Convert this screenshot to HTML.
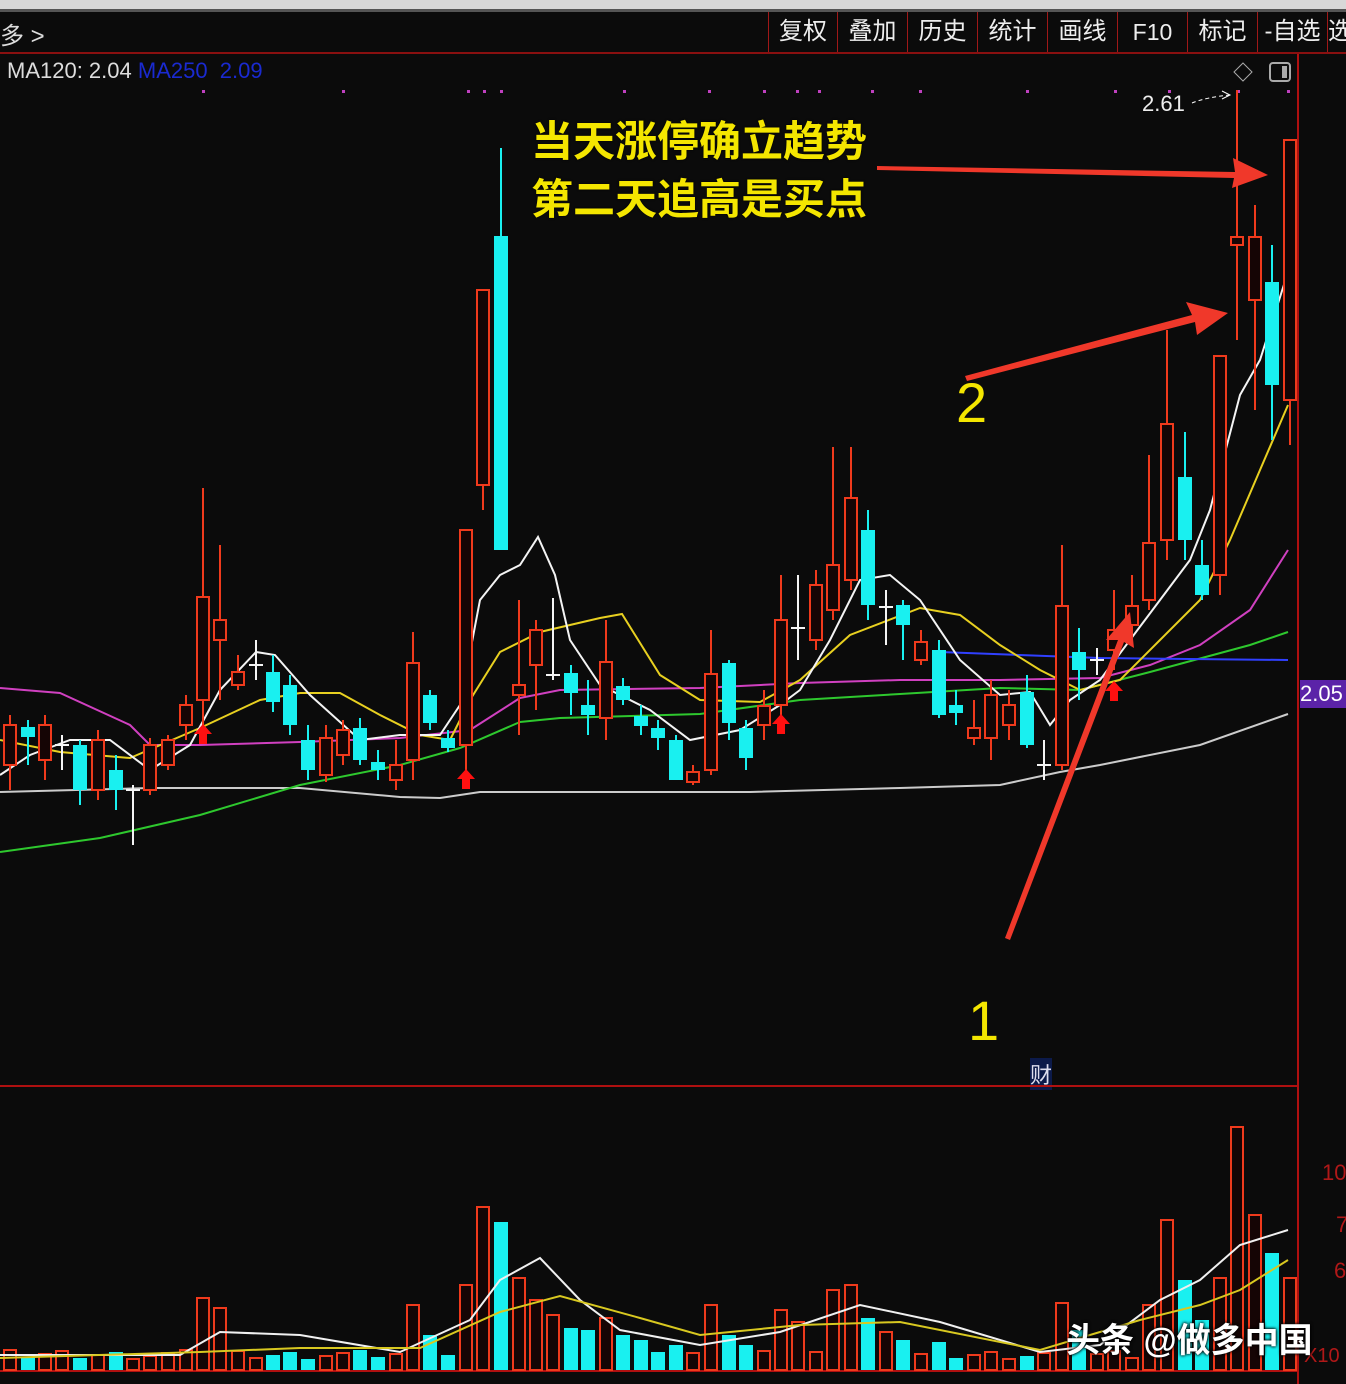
<!DOCTYPE html>
<html><head><meta charset="utf-8">
<style>
html,body{margin:0;padding:0;background:#0b0b0b;width:1346px;height:1384px;overflow:hidden}
#w{position:relative;width:1346px;height:1384px;font-family:"Liberation Sans","Noto Sans CJK SC",sans-serif}
.t{position:absolute;white-space:nowrap}
</style></head><body><div id="w">
<div style="position:absolute;left:0;top:0;width:1346px;height:9px;background:#d8d8d8"></div>
<div style="position:absolute;left:0;top:9px;width:1346px;height:3px;background:#555"></div>
<div class="t" style="left:0;top:16px;color:#ddd;font-size:24px">多 &gt;</div>
<div style="position:absolute;left:768px;top:12px;height:40px;display:flex">
<div style="border-left:1px solid #a01818;width:68px;color:#eee;font-size:24px;text-align:center;line-height:40px">复权</div>
<div style="border-left:1px solid #a01818;width:69px;color:#eee;font-size:24px;text-align:center;line-height:40px">叠加</div>
<div style="border-left:1px solid #a01818;width:69px;color:#eee;font-size:24px;text-align:center;line-height:40px">历史</div>
<div style="border-left:1px solid #a01818;width:69px;color:#eee;font-size:24px;text-align:center;line-height:40px">统计</div>
<div style="border-left:1px solid #a01818;width:69px;color:#eee;font-size:24px;text-align:center;line-height:40px">画线</div>
<div style="border-left:1px solid #a01818;width:69px;color:#eee;font-size:23px;text-align:center;line-height:40px">F10</div>
<div style="border-left:1px solid #a01818;width:69px;color:#eee;font-size:24px;text-align:center;line-height:40px">标记</div>
<div style="border-left:1px solid #a01818;width:69px;color:#eee;font-size:24px;text-align:center;line-height:40px">-自选</div>
<div style="border-left:1px solid #a01818;width:20px;color:#eee;font-size:24px;line-height:40px;overflow:hidden">选</div>
</div>
<div style="position:absolute;left:0;top:52px;width:1346px;height:2px;background:#8a1010"></div>
<div class="t" style="left:7px;top:58px;color:#ddd;font-size:22px">MA120: 2.04 <span style="color:#1a2ad0">MA250 &nbsp;2.09</span></div>
<div class="t" style="left:1142px;top:91px;color:#eee;font-size:22px">2.61</div>
<div class="t" style="left:531px;top:108px;color:#f4e600;font-size:42px;font-weight:bold;text-shadow:0 0 2px #000">当天涨停确立趋势</div>
<div class="t" style="left:531px;top:166px;color:#f4e600;font-size:42px;font-weight:bold;text-shadow:0 0 2px #000">第二天追高是买点</div>
<div class="t" style="left:956px;top:370px;color:#f4e600;font-size:56px">2</div>
<div class="t" style="left:968px;top:988px;color:#f4e600;font-size:56px">1</div>
<div class="t" style="left:1030px;top:1058px;color:#dde;font-size:22px;background:#0c1a4a">财</div>
<div class="t" style="left:1300px;top:680px;width:46px;height:28px;background:#5b23a8;color:#fff;font-size:22px;line-height:28px">2.05</div>
<div class="t" style="left:1322px;top:1160px;color:#b01818;font-size:22px">10</div>
<div class="t" style="left:1336px;top:1212px;color:#b01818;font-size:22px">7</div>
<div class="t" style="left:1334px;top:1258px;color:#b01818;font-size:22px">6</div>
<div class="t" style="left:1304px;top:1345px;color:#b01818;font-size:20px">X10</div>
<svg id="s" width="1346" height="1384" style="position:absolute;left:0;top:0"></svg>
<div class="t" style="left:1066px;top:1313px;color:#fff;font-size:34px;font-weight:bold;text-shadow:0 0 3px #000,0 0 3px #000">头条 @做多中国</div>
</div>
<script>
var s=document.getElementById('s'),h='';
h+='<line x1="1298" y1="54" x2="1298" y2="1384" stroke="#b01010" stroke-width="2"/>';
h+='<line x1="0" y1="1086" x2="1298" y2="1086" stroke="#b01010" stroke-width="2"/>';
h+='<line x1="0" y1="1371" x2="1298" y2="1371" stroke="#b01010" stroke-width="2"/>';
h+='<path d="M1243 63 l9 9 -9 9 -9 -9z" fill="none" stroke="#aaa"/><rect x="1270" y="63" width="20" height="18" rx="3" fill="none" stroke="#aaa" stroke-width="2"/><rect x="1282" y="66" width="5" height="12" fill="#aaa"/>';
[202,342,467,483,500,623,708,763,796,818,871,919,1026,1114,1168,1237,1287].forEach(function(x){h+='<rect x="'+x+'" y="90" width="3" height="3" fill="#c040c0"/>';});
h+='<path d="M1192 103 q15 -6 38 -8" stroke="#fff" fill="none" stroke-dasharray="4 3"/><path d="M1222 91 l8 4 -8 4" stroke="#fff" fill="none"/>';
function pl(p,c,w){h+='<polyline points="'+p+'" fill="none" stroke="'+c+'" stroke-width="'+(w||2)+'"/>';}
pl("0,792 150,788 300,788 400,797 440,798 480,792 600,792 750,792 900,788 1000,785 1060,772 1100,765 1200,745 1288,714","#ccc");
pl("0,852 100,838 200,815 300,785 400,765 460,748 520,722 560,718 700,714 800,700 900,694 1000,688 1080,690 1150,672 1250,645 1288,632","#2ec82e");
pl("0,688 60,693 130,725 150,745 200,745 300,742 400,738 470,730 520,698 560,690 700,688 800,683 900,680 1000,680 1100,678 1150,665 1200,645 1250,610 1288,550","#d040c0");
pl("940,652 1100,658 1288,660","#3040ff");
pl("0,740 60,752 130,758 200,728 260,700 300,693 340,693 380,715 420,735 450,740 470,700 500,652 540,632 600,618 622,614 660,675 700,700 760,702 800,680 850,635 920,608 960,615 1000,645 1040,670 1080,690 1120,680 1160,640 1200,600 1230,540 1260,470 1288,405","#e8d020");
pl("0,775 30,755 70,740 110,740 150,770 190,745 220,690 256,652 275,655 310,695 360,740 400,735 440,735 460,705 480,600 500,575 520,565 538,537 555,575 570,640 600,685 650,710 690,740 740,730 780,705 800,690 830,640 860,580 890,575 920,600 960,660 1000,695 1030,692 1050,725 1070,700 1100,680 1130,640 1160,600 1190,560 1210,510 1240,395 1260,360 1288,272","#f4f4f4");
var C=[[10,725,765,715,790,'r'],[28,727,737,720,765,'c'],[45,725,760,715,780,'r'],[62,745,745,735,770,'w'],[80,745,790,740,805,'c'],[98,740,790,730,800,'r'],[116,770,790,755,810,'c'],[133,790,790,785,845,'w'],[150,745,790,738,795,'r'],[168,740,765,735,770,'r'],[186,705,725,695,740,'r'],[203,597,700,488,740,'r'],[220,620,640,545,700,'r'],[238,672,685,655,690,'r'],[256,665,665,640,680,'w'],[273,672,702,655,712,'c'],[290,685,725,675,735,'c'],[308,740,770,725,780,'c'],[326,738,775,725,782,'r'],[343,730,755,720,765,'r'],[360,728,760,718,765,'c'],[378,762,770,750,780,'c'],[396,765,780,740,790,'r'],[413,663,760,632,780,'r'],[430,695,723,690,730,'c'],[448,738,748,730,752,'c'],[466,530,745,530,775,'r'],[483,290,485,290,510,'r'],[501,236,550,148,550,'c'],[519,685,695,600,735,'r'],[536,630,665,620,710,'r'],[553,675,675,598,680,'w'],[571,673,693,665,715,'c'],[588,705,715,680,735,'c'],[606,662,718,620,740,'r'],[623,686,700,678,705,'c'],[641,716,726,705,735,'c'],[658,728,738,720,750,'c'],[676,740,780,735,780,'c'],[693,772,782,765,785,'r'],[711,674,770,630,775,'r'],[729,663,723,660,740,'c'],[746,728,758,720,770,'c'],[764,706,725,690,740,'r'],[781,620,705,575,720,'r'],[798,628,628,575,660,'w'],[816,585,640,570,650,'r'],[833,565,610,447,620,'r'],[851,498,580,447,590,'r'],[868,530,605,510,620,'c'],[886,607,607,590,645,'w'],[903,605,625,600,660,'c'],[921,642,660,630,665,'r'],[939,650,715,640,718,'c'],[956,705,713,690,725,'c'],[974,728,738,700,745,'r'],[991,695,738,680,760,'r'],[1009,705,725,690,740,'r'],[1027,692,745,675,748,'c'],[1044,765,765,740,780,'w'],[1062,606,765,545,770,'r'],[1079,652,670,628,700,'c'],[1097,660,660,648,675,'w'],[1114,630,650,590,670,'r'],[1132,606,625,575,640,'r'],[1149,543,600,455,610,'r'],[1167,424,540,330,560,'r'],[1185,477,540,432,560,'c'],[1202,565,595,540,600,'c'],[1220,356,575,356,595,'r'],[1237,237,245,90,340,'r'],[1255,237,300,205,410,'r'],[1272,282,385,245,440,'c'],[1290,140,400,140,445,'r']];
C.forEach(function(c){var x=c[0],col=c[5]=='r'?'#f03a1c':c[5]=='c'?'#19f0f0':'#f4f4f4';
h+='<line x1="'+x+'" y1="'+c[3]+'" x2="'+x+'" y2="'+c[4]+'" stroke="'+col+'" stroke-width="2"/>';
if(c[5]=='w')h+='<line x1="'+(x-7)+'" y1="'+c[1]+'" x2="'+(x+7)+'" y2="'+c[1]+'" stroke="#f4f4f4" stroke-width="2"/>';
else if(c[5]=='c')h+='<rect x="'+(x-7)+'" y="'+c[1]+'" width="14" height="'+Math.max(6,c[2]-c[1])+'" fill="#19f0f0"/>';
else h+='<rect x="'+(x-6)+'" y="'+c[1]+'" width="12" height="'+Math.max(6,c[2]-c[1])+'" fill="#150505" stroke="#f03a1c" stroke-width="2"/>';});
[[203,742],[466,787],[781,732],[1114,699]].forEach(function(a){var x=a[0],y=a[1];h+='<path d="M'+x+' '+(y-18)+' l9 10 h-5 v10 h-8 v-10 h-5z" fill="#ff1010"/>';});
var V={203:1298,220:1308,413:1305,430:1335,466:1285,483:1207,501:1222,519:1278,536:1300,553:1315,571:1328,588:1330,606:1318,623:1335,641:1340,658:1352,676:1345,711:1305,729:1335,746:1345,781:1310,798:1322,833:1290,851:1285,868:1318,886:1332,903:1340,939:1342,1062:1303,1079:1330,1149:1305,1167:1220,1185:1280,1202:1320,1220:1278,1237:1127,1255:1215,1272:1253,1290:1278};
C.forEach(function(c,i){var x=c[0],t=V[x]||(1350+(i*7)%10);
if(c[5]=='c')h+='<rect x="'+(x-7)+'" y="'+t+'" width="14" height="'+(1370-t)+'" fill="#19f0f0"/>';
else h+='<rect x="'+(x-6)+'" y="'+t+'" width="12" height="'+(1370-t)+'" fill="#150505" stroke="#f03a1c" stroke-width="2"/>';});
pl("0,1355 180,1355 220,1332 300,1335 400,1352 470,1320 500,1280 540,1258 580,1300 620,1330 700,1345 780,1332 860,1305 940,1322 1040,1352 1100,1345 1160,1300 1200,1280 1240,1245 1288,1230","#f0f0f0");
pl("0,1358 200,1352 300,1348 420,1348 500,1312 560,1296 640,1318 700,1335 800,1325 900,1322 1040,1350 1140,1320 1200,1305 1240,1290 1288,1260","#d8c820");
h+='<path d="M877 166 L1235 172 L1233 158 L1268 175 L1232 188 L1234 178 L877 170z" fill="#f0382a"/>';
h+='<path d="M965 376 L1192 315 L1186 302 L1228 313 L1197 335 L1195 322 L967 381z" fill="#f0382a"/>';
h+='<path d="M1005 938 L1118 640 L1106 640 L1130 612 L1134 648 L1124 642 L1010 940z" fill="#f0382a"/>';
s.innerHTML=h;
</script>
</body></html>
